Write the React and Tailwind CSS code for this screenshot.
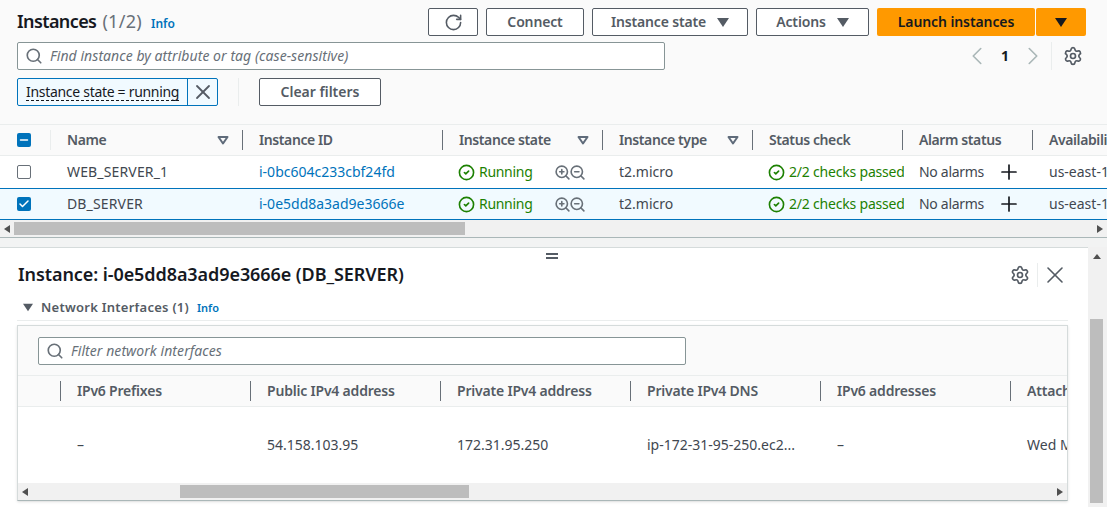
import React from "react";
import { Search, X, RotateCw, ChevronLeft, ChevronRight, Settings, ZoomIn, ZoomOut, CircleCheck, Plus, Check, Minus } from "lucide-react";

const Caret = ({ className = "" }) => (
  <svg width="12" height="9" viewBox="0 0 12 9" className={className}><path d="M0 0h12L6 9z" fill="currentColor" /></svg>
);
const SortCaret = () => (
  <svg width="12" height="9" viewBox="0 0 12 9" className="text-[#5f6b7a]"><path d="M1.5 1h9L6 7.5z" fill="none" stroke="currentColor" strokeWidth="2" strokeLinejoin="round" /></svg>
);
const Arrow = ({ d }) => (
  <svg width="6" height="8" viewBox="0 0 6 8" className="text-[#505050]"><path d={d} fill="currentColor" /></svg>
);

function Btn({ w, children }) {
  return (
    <button className={`${w} h-7 flex items-center justify-center gap-[11px] border border-[#545b64] rounded-[2px] bg-white font-semibold text-[#545b64] text-sm tracking-[-0.15px]`}>
      {children}
    </button>
  );
}

const mainCols = [
  { w: "w-[192px]", label: "Name", sort: true },
  { w: "w-[200px]", label: "Instance ID" },
  { w: "w-[160px]", label: "Instance state", sort: true },
  { w: "w-[150px]", label: "Instance type", sort: true },
  { w: "w-[150px]", label: "Status check" },
  { w: "w-[130px]", label: "Alarm status" },
  { w: "w-[120px]", label: "Availabili", last: true },
];

function HeadCell({ c }) {
  return (
    <div className={`${c.w} shrink-0 h-full flex items-center relative pl-[17px] pr-[13px] justify-between`}>
      <span className="text-sm font-semibold text-[#545b64] whitespace-nowrap tracking-[-0.4px]">{c.label}</span>
      {c.sort && <SortCaret />}
      {!c.last && <span className="absolute -right-px top-[5px] bottom-[5px] w-px bg-[#687078]" />}
    </div>
  );
}

function Row({ selected, name, id }) {
  return (
    <div className={`flex items-center h-[32px] text-sm text-[#414750] whitespace-nowrap ${selected ? "bg-[#f1faff] border-y border-[#0073bb]" : "bg-white"}`}>
      <div className="w-[50px] shrink-0 pl-[17px]">
        {selected ? (
          <div className="w-[14px] h-[14px] rounded-[2px] bg-[#0073bb] flex items-center justify-center"><Check size={12} strokeWidth={3} className="text-white" /></div>
        ) : (
          <div className="w-[14px] h-[14px] rounded-[2px] border border-[#687078] bg-white" />
        )}
      </div>
      <div className="w-[192px] shrink-0 pl-[17px] tracking-[0.15px]">{name}</div>
      <div className="w-[200px] shrink-0 pl-[17px] text-[#0073bb]">{id}</div>
      <div className="w-[160px] shrink-0 pl-[17px] flex items-center">
        <CircleCheck size={17} strokeWidth={2.3} className="text-[#1d8102] mr-[4px] -ml-px" />
        <span className="text-[#1d8102] w-[75px] tracking-[-0.3px]">Running</span>
        <ZoomIn size={17} strokeWidth={2.3} className="text-[#687078]" />
        <ZoomOut size={17} strokeWidth={2.3} className="text-[#687078] -ml-[2px]" />
      </div>
      <div className="w-[150px] shrink-0 pl-[17px]">t2.micro</div>
      <div className="w-[152px] shrink-0 pl-[17px] flex items-center overflow-hidden">
        <CircleCheck size={17} strokeWidth={2.3} className="text-[#1d8102] mr-[4px] -ml-px shrink-0" />
        <span className="text-[#1d8102] tracking-[-0.2px]">2/2 checks passed</span>
      </div>
      <div className="w-[128px] shrink-0 pl-[15px] flex items-center">
        <span className="w-[78px] tracking-[-0.3px]">No alarms</span>
        <Plus size={24} strokeWidth={1.7} className="text-[#16191f]" />
      </div>
      <div className="w-[120px] shrink-0 pl-[17px]">us-east-1a</div>
    </div>
  );
}

const subCols = [
  ["IPv6 Prefixes", "–"],
  ["Public IPv4 address", "54.158.103.95"],
  ["Private IPv4 address", "172.31.95.250"],
  ["Private IPv4 DNS", "ip-172-31-95-250.ec2..."],
  ["IPv6 addresses", "–"],
  ["Attachment time", "Wed Mar"],
];

export default function App() {
  return (
    <div className="w-[1107px] h-[507px] overflow-hidden bg-[#f2f3f3] text-sm" style={{ fontFamily: '"Noto Sans", sans-serif' }}>
      <div className="h-[238px] bg-[#fafafa] border-b border-[#aab7b8] flex flex-col overflow-hidden">
        <div className="h-[124px] px-[17px] pt-2 shrink-0">
          <div className="flex items-center justify-between h-7 pr-[4px]">
            <div className="flex items-baseline">
              <span className="text-[18px] font-semibold text-[#16191f] tracking-[-0.6px]">Instances</span>
              <span className="text-[18px] text-[#687078] ml-[6px] tracking-[0.3px]">(1/2)</span>
              <span className="text-xs font-semibold text-[#0073bb] ml-[9px]">Info</span>
            </div>
            <div className="flex items-center gap-2">
              <Btn w="w-[50px]"><RotateCw size={19} strokeWidth={2} /></Btn>
              <Btn w="w-[98px]">Connect</Btn>
              <Btn w="w-[156px]">Instance state <Caret /></Btn>
              <Btn w="w-[113px]">Actions <Caret /></Btn>
              <div className="flex gap-px">
                <button className="w-[158px] h-7 rounded-[2px] bg-[#ff9900] font-semibold text-[#16191f] text-sm tracking-[-0.1px]">Launch instances</button>
                <button className="w-[50px] h-7 rounded-[2px] bg-[#ff9900] flex items-center justify-center text-[#16191f]"><Caret /></button>
              </div>
            </div>
          </div>
          <div className="flex items-center mt-[6px] h-7">
            <div className="w-[648px] h-7 flex items-center bg-white border border-[#879596] rounded-[2px] pl-[7px]">
              <Search size={18} strokeWidth={2.2} className="text-[#687078]" />
              <span className="italic text-[#687078] ml-[7px] tracking-[0.06px]">Find instance by attribute or tag (case-sensitive)</span>
            </div>
            <div className="flex items-center ml-[297px]">
              <ChevronLeft size={30} strokeWidth={1.3} className="text-[#aab7b8]" />
              <span className="font-bold text-[#16191f] w-[26px] text-center">1</span>
              <ChevronRight size={30} strokeWidth={1.3} className="text-[#aab7b8]" />
              <span className="w-px h-7 bg-[#eaeded] ml-[3px]" />
              <Settings size={20} strokeWidth={2} className="text-[#545b64] ml-[11px]" />
            </div>
          </div>
          <div className="flex items-center mt-2 h-7">
            <div className="w-[201px] h-7 flex bg-[#f1faff] border border-[#0073bb] rounded-[2px]">
              <div className="w-[170px] flex items-center pl-2 border-r border-[#0073bb]">
                <span className="text-[#16191f] whitespace-nowrap border-b border-dashed border-[#16191f] leading-[17px] tracking-[-0.3px]">Instance state = running</span>
              </div>
              <div className="flex-1 flex items-center justify-center"><X size={24} strokeWidth={1.8} className="text-[#545b64]" /></div>
            </div>
            <span className="w-px h-7 bg-[#eaeded] ml-[20px]" />
            <button className="w-[122px] h-7 ml-[20px] border border-[#545b64] rounded-[2px] bg-white font-semibold text-[#545b64] text-sm">Clear filters</button>
          </div>
        </div>
        <div className="h-[32px] shrink-0 flex items-center bg-[#fafafa] border-y border-[#eaeded]">
          <div className="w-[50px] shrink-0 h-full relative pl-[17px] flex items-center">
            <div className="w-[14px] h-[14px] rounded-[2px] bg-[#0073bb] flex items-center justify-center"><Minus size={12} strokeWidth={3} className="text-white" /></div>
            <span className="absolute -right-px top-[5px] bottom-[5px] w-px bg-[#eaeded]" />
          </div>
          {mainCols.map((c) => <HeadCell key={c.label} c={c} />)}
        </div>
        <Row name="WEB_SERVER_1" id="i-0bc604c233cbf24fd" />
        <Row selected name="DB_SERVER" id="i-0e5dd8a3ad9e3666e" />
        <div className="h-[17px] shrink-0 bg-[#f1f1f1] flex items-center justify-between px-1 relative">
          <Arrow d="M6 0v8L0 4z" />
          <span className="absolute left-[14px] top-[2px] w-[451px] h-[13px] bg-[#bdbdbd]" />
          <Arrow d="M0 0v8l6-4z" />
        </div>
      </div>
      <div className="h-[269px] mt-[9px] flex relative">
        <span className="absolute left-[546px] top-[6px] w-[12px] h-[6px] border-y-2 border-[#545b64] z-10" />
        <div className="w-[1088px] bg-white border-t border-[#d5dbdb] px-[17px]">
          <div className="flex items-center justify-between h-[55px] pb-[2px] pr-[2px]">
            <span className="text-[18px] font-semibold text-[#16191f] pl-px tracking-[-0.08px]">Instance: i-0e5dd8a3ad9e3666e (DB_SERVER)</span>
            <div className="flex items-center">
              <Settings size={20} strokeWidth={2} className="text-[#545b64]" />
              <span className="w-px h-6 bg-[#eaeded] ml-[7px] mr-[3px]" />
              <X size={28} strokeWidth={1.4} className="text-[#545b64]" />
            </div>
          </div>
          <div className="h-[18px] border-b border-[#eaeded] overflow-hidden mr-[3px]">
            <div className="flex items-center h-[17px] pl-[6px] -mt-[4px]">
              <Caret className="text-[#545b64] w-[10px]" />
              <span className="font-semibold text-[#545b64] ml-[8px] text-[13px] tracking-[0.25px]">Network Interfaces (1)</span>
              <span className="text-[11px] font-semibold text-[#0073bb] ml-[8px]">Info</span>
            </div>
          </div>
          <div className="mt-1 w-[1051px] h-[176px] border border-[#d5dbdb] border-b-[#aab7b8] bg-[#fafafa] flex flex-col overflow-hidden shadow-sm">
            <div className="h-[49px] shrink-0 pl-5 pt-[11px]">
              <div className="w-[648px] h-7 flex items-center bg-white border border-[#879596] rounded-[2px] pl-[7px]">
                <Search size={18} strokeWidth={2.2} className="text-[#687078]" />
                <span className="italic text-[#687078] ml-[7px] tracking-[0.06px]">Filter network interfaces</span>
              </div>
            </div>
            <div className="h-[32px] shrink-0 flex border-y border-[#eaeded]">
              <div className="w-[42px] shrink-0 relative"><span className="absolute -right-px top-[5px] bottom-[5px] w-px bg-[#687078]" /></div>
              {subCols.map(([h], i) => (
                <div key={h} className="w-[190px] shrink-0 pl-[17px] relative flex items-center">
                  <span className="font-semibold text-[#545b64] whitespace-nowrap tracking-[-0.2px]">{h}</span>
                  {i < 5 && <span className="absolute -right-px top-[5px] bottom-[5px] w-px bg-[#687078]" />}
                </div>
              ))}
            </div>
            <div className="flex-1 flex bg-white text-[#414750] items-center">
              <div className="w-[42px] shrink-0" />
              {subCols.map(([h, v]) => (
                <div key={h} className="w-[190px] shrink-0 pl-[17px] whitespace-nowrap">{v}</div>
              ))}
            </div>
            <div className="h-[17px] shrink-0 bg-[#f1f1f1] flex items-center justify-between px-1 relative">
              <Arrow d="M6 0v8L0 4z" />
              <span className="absolute left-[162px] top-[2px] w-[289px] h-[13px] bg-[#bdbdbd]" />
              <Arrow d="M0 0v8l6-4z" />
            </div>
          </div>
        </div>
        <div className="w-[19px] bg-[#f1f1f1] relative">
          <svg width="10" height="6" viewBox="0 0 10 6" className="absolute left-[4px] top-[7px] text-[#505050]"><path d="M5 0l4 5H1z" fill="currentColor" /></svg>
          <span className="absolute left-[2px] top-[72px] w-[13px] h-[184px] bg-[#bdbdbd]" />
        </div>
      </div>
    </div>
  );
}
